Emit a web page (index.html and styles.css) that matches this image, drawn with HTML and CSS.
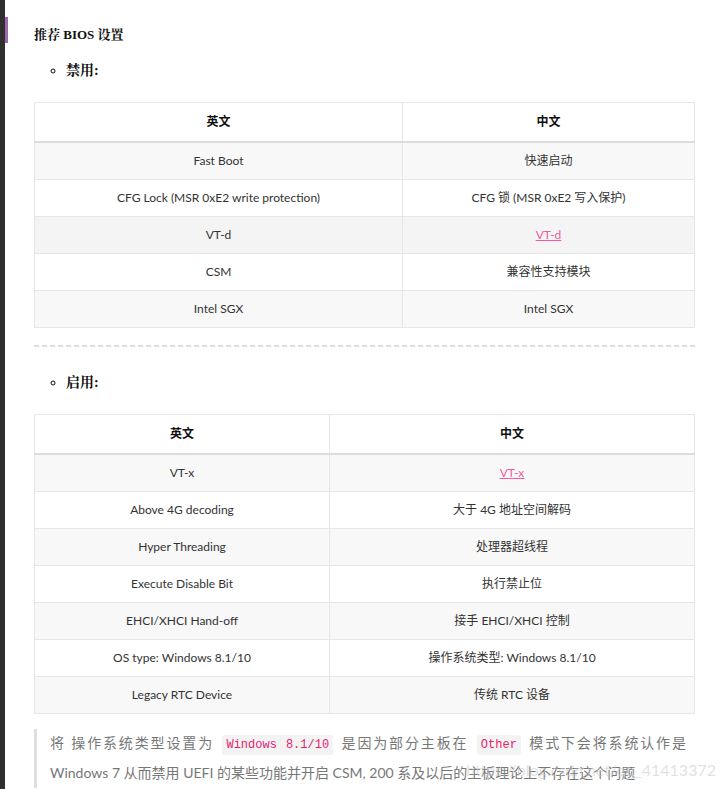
FILE: index.html
```html
<!DOCTYPE html>
<html lang="zh-CN">
<head>
<meta charset="utf-8">
<title>推荐 BIOS 设置</title>
<link rel="stylesheet" href="styles.css">
</head>
<body>
<div class="page">
  <div class="rail"></div>
  <div class="mark"><div class="mark-bar"></div></div>
  <main class="content">
    <h4 class="title">推荐 BIOS 设置</h4>
    <ul class="list first"><li>禁用:</li></ul>
    <table class="grid t1">
      <thead><tr><th class="c1">英文</th><th>中文</th></tr></thead>
      <tbody>
        <tr class="odd"><td>Fast Boot</td><td>快速启动</td></tr>
        <tr><td>CFG Lock (MSR 0xE2 write protection)</td><td>CFG 锁 (MSR 0xE2 写入保护)</td></tr>
        <tr class="odd hover"><td>VT-d</td><td><a class="link" href="#">VT-d</a></td></tr>
        <tr><td>CSM</td><td>兼容性支持模块</td></tr>
        <tr class="odd"><td>Intel SGX</td><td>Intel SGX</td></tr>
      </tbody>
    </table>
    <div class="dash"></div>
    <ul class="list second"><li>启用:</li></ul>
    <table class="grid t2">
      <thead><tr><th class="c1">英文</th><th>中文</th></tr></thead>
      <tbody>
        <tr class="odd"><td>VT-x</td><td><a class="link" href="#">VT-x</a></td></tr>
        <tr><td>Above 4G decoding</td><td>大于 4G 地址空间解码</td></tr>
        <tr class="odd"><td>Hyper Threading</td><td>处理器超线程</td></tr>
        <tr><td>Execute Disable Bit</td><td>执行禁止位</td></tr>
        <tr class="odd"><td>EHCI/XHCI Hand-off</td><td>接手 EHCI/XHCI 控制</td></tr>
        <tr><td>OS type: Windows 8.1/10</td><td>操作系统类型: Windows 8.1/10</td></tr>
        <tr class="odd"><td>Legacy RTC Device</td><td>传统 RTC 设备</td></tr>
      </tbody>
    </table>
    <blockquote class="note">
      <p>将 操作系统类型设置为 <code>Windows 8.1/10</code> 是因为部分主板在 <code>Other</code> 模式下会将系统认作是 Windows 7 从而禁用 UEFI 的某些功能并开启 CSM, 200 系及以后的主板理论上不存在这个问题</p>
    </blockquote>
  </main>
  <div class="watermark">https://blog.csdn.net/qq_41413372</div>
</div>
</body>
</html>
```
FILE: styles.css
```css
html, body {
  margin: 0;
  padding: 0;
  background: #fff;
}
body {
  font-family: Lato, "Noto Sans CJK SC", sans-serif;
  color: #333;
  font-size: 12px;
}
.page {
  position: relative;
  display: flex;
  min-height: 789px;
  overflow: hidden;
}
.rail {
  width: 5px;
  background: #2f2f2f;
  flex: none;
}
.mark {
  width: 3px;
  flex: none;
}
.mark-bar {
  margin-top: 17px;
  height: 26px;
  background: #9e67a9;
}
.content {
  flex: 1;
  padding: 0 30px 0 26px;
}
.title {
  margin: 0;
  padding-top: 27px;
  line-height: 16px;
  font-size: 13px;
  font-weight: bold;
  font-family: "Liberation Serif", "Noto Serif CJK SC", "Noto Sans CJK SC", serif;
  color: #111;
}
.list {
  margin: 0;
  padding-left: 32px;
  list-style: circle;
  font-family: "Liberation Serif", "Noto Serif CJK SC", "Noto Sans CJK SC", serif;
  font-size: 14px;
  font-weight: bold;
  line-height: 20px;
  color: #111;
}
.list.first { margin-top: 18px; }
.list.second { margin-top: 26px; }
.grid {
  width: 100%;
  border-collapse: collapse;
  border: 1px solid #e2e2e2;
  margin-top: 21px;
  table-layout: fixed;
}
.t1 .c1 { width: 351px; }
.t2 .c1 { width: 278px; }
.grid th, .grid td {
  border: 1px solid #e6e6e6;
  text-align: center;
  line-height: 20px;
}
.grid th {
  padding: 8px 8px 10px;
  font-weight: bold;
  color: #111;
  border-bottom: 2px solid #dcdcdc;
  font-family: "Noto Sans CJK SC", sans-serif;
}
.grid td {
  padding: 8px;
}
.grid tr.odd td {
  background: #f8f8f8;
}
.grid tr.hover td {
  background: #f4f4f4;
}
.link {
  color: #f25a9f;
  text-decoration: underline;
}
.dash {
  margin-top: 17px;
  height: 2px;
  background: repeating-linear-gradient(90deg, #dedede 0 5px, transparent 5px 8px);
}
.note {
  margin: 15px 0 0;
  border-left: 3px solid #dedede;
  padding: 0 9px 1px 13px;
  color: #777;
  font-size: 14px;
  line-height: 28px;
}
.note p {
  margin: 0;
  text-align: justify;
}
.note code {
  font-family: "Liberation Mono", monospace;
  font-size: 12px;
  color: #e6226f;
  background: #f3f3f3;
  padding: 3px 4px;
  border-radius: 3px;
  margin: 0 3px;
}
.watermark {
  position: absolute;
  right: 9px;
  top: 760px;
  font-size: 16px;
  font-family: Lato, sans-serif;
  color: rgba(200, 200, 200, 0.55);
  pointer-events: none;
}
```
